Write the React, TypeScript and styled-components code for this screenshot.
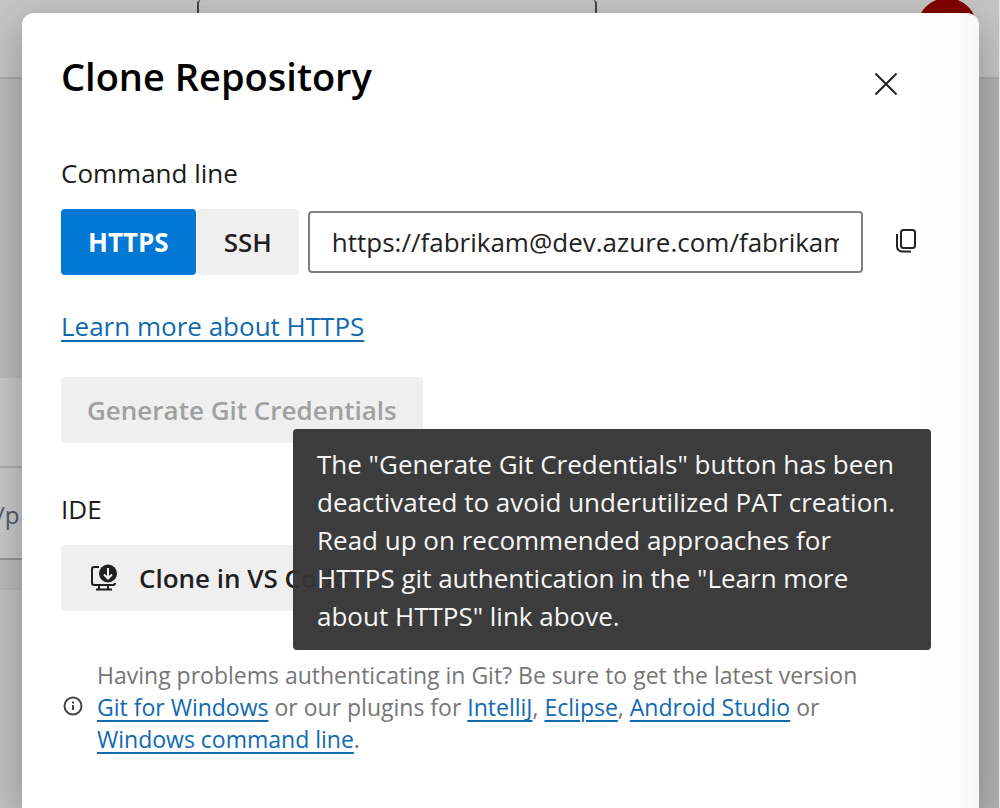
import React from "react";
import styled, { createGlobalStyle } from "styled-components";

const Global = createGlobalStyle`
  *, *::before, *::after { box-sizing: border-box; }
  body { margin: 0; background: #c4c4c4; font-family: "Open Sans", "Noto Sans", sans-serif; color: #1b1b1b; }
  button, input { font-family: inherit; }
`;

const Screen = styled.div`
  display: grid;
  min-height: 100vh;
  overflow: hidden;
  border-right: 1px solid #e6e6e6;
`;
const Backdrop = styled.div`
  grid-area: 1 / 1;
  display: flex;
  flex-direction: column;
  background: linear-gradient(to right, #c2c2c2 60%, #b2b2b2 90%);
`;
const TopBar = styled.div`
  display: flex;
  align-items: flex-start;
  justify-content: space-between;
  height: 79px;
  padding: 0 22px 0 197px;
  background: #c5c5c5;
  border-bottom: 2px solid #a9a9a9;
`;
const SearchBox = styled.div`
  width: 400px;
  height: 56px;
  border: 2px solid #444;
  border-top: 0;
  border-radius: 4px;
`;
const Avatar = styled.div`
  width: 60px;
  height: 60px;
  margin-top: -2px;
  border-radius: 50%;
  background: #820000;
`;
const SideList = styled.div`
  width: 60px;
`;
const Band = styled.div<{ $h: number; $bg: string; $line: string }>`
  display: flex;
  align-items: center;
  height: ${(p) => p.$h}px;
  padding-top: 4px;
  background: ${(p) => p.$bg};
  border-bottom: 2px solid ${(p) => p.$line};
  font-size: 24px;
  line-height: 36px;
  color: #4f5a68;
`;
const PathText = styled.span`
  width: 24px;
  margin-left: -4px;
  overflow: hidden;
`;

const Dialog = styled.section`
  grid-area: 1 / 1;
  z-index: 1;
  margin: 13px 20px 0 22px;
  padding: 39px;
  border-radius: 12px 12px 0 0;
  background: linear-gradient(to left, #f6f6f6, #fdfdfd 24px, #fff 60px);
  box-shadow: 0 12px 40px rgba(0, 0, 0, 0.28);
`;
const Header = styled.header`
  display: flex;
  align-items: flex-end;
  justify-content: space-between;
  padding-right: 38px;
`;
const Title = styled.h1`
  margin: 0;
  font-size: 38px;
  line-height: 48px;
  font-weight: 600;
  color: #000;
`;
const IconButton = styled.button`
  display: flex;
  padding: 5px;
  border: 0;
  background: none;
  color: #222;
`;
const Label = styled.h2`
  margin: 0;
  font-size: 26px;
  line-height: 36px;
  font-weight: 400;
`;
const Section = styled.div<{ $top: number }>`
  margin-top: ${(p) => p.$top}px;
`;
const CloneRow = styled.div`
  display: flex;
  align-items: center;
  margin-top: 18px;
  padding-right: 15px;
`;
const Button = styled.button<{ $primary?: boolean }>`
  display: flex;
  align-items: center;
  gap: 20px;
  height: 66px;
  padding: 0 26px;
  border: 0;
  border-radius: 4px;
  background: #efefef;
  color: #1f1f1f;
  font-size: 26px;
  line-height: 36px;
  font-weight: 600;
  white-space: nowrap;
  &:disabled { color: #a0a0a0; }
`;
const Toggle = styled(Button)`
  padding: 0 27px;
  margin-right: 1px;
  background: ${(p) => (p.$primary ? "#0078d4" : "#efefef")};
  color: ${(p) => (p.$primary ? "#fff" : "#1f1f1f")};
  font-weight: ${(p) => (p.$primary ? 700 : 600)};
`;
const UrlInput = styled.input`
  flex: 1;
  min-width: 0;
  height: 62px;
  margin: 0 28px 0 8px;
  padding: 0 22px;
  border: 2px solid #808080;
  border-radius: 4px;
  background: #fff;
  color: #222;
  font-size: 26px;
  text-overflow: clip;
`;
const Link = styled.a`
  color: #106ab0;
  text-decoration: underline;
  text-decoration-thickness: 2px;
  text-underline-offset: 4px;
`;
const LearnMore = styled.p`
  margin: 33px 0;
  font-size: 26px;
  line-height: 36px;
`;
const TipAnchor = styled.div`
  position: relative;
`;
const Tooltip = styled.div`
  position: absolute;
  z-index: 2;
  top: 52px;
  left: 232px;
  width: 638px;
  padding: 16px 24px 15px;
  border-radius: 4px;
  background: rgba(52, 52, 52, 0.96);
  color: #f6f6f6;
  font-size: 26px;
  line-height: 38px;
  font-weight: 500;
`;
const Help = styled.div`
  display: flex;
  align-items: center;
  gap: 14px;
  margin-top: 48px;
  color: #767676;
`;
const HelpText = styled.p`
  margin: 0;
  font-size: 23px;
  line-height: 32px;
`;

export default function App() {
  return (
    <Screen>
      <Global />
      <Backdrop aria-hidden="true">
        <TopBar>
          <SearchBox />
          <Avatar />
        </TopBar>
        <SideList>
          <Band $h={299} $bg="#bcbcbc" $line="#b8b8b8" />
          <Band $h={90} $bg="#c8c8c8" $line="#b0b0b0" />
          <Band $h={92} $bg="#c8c8c8" $line="#969696">
            <PathText>/pr</PathText>
          </Band>
          <Band $h={30} $bg="#bcbcbc" $line="#b6b6b6" />
        </SideList>
      </Backdrop>
      <Dialog role="dialog" aria-labelledby="clone-title">
        <Header>
          <Title id="clone-title">Clone Repository</Title>
          <IconButton aria-label="Close">
            <svg width="22" height="22" viewBox="0 0 22 22" fill="none" stroke="currentColor" strokeWidth="2">
              <path d="M.5 .5l21 21M21.500 .5l-21 21" />
            </svg>
          </IconButton>
        </Header>
        <Section $top={55}>
          <Label>Command line</Label>
          <CloneRow>
            <Toggle $primary>HTTPS</Toggle>
            <Toggle>SSH</Toggle>
            <UrlInput aria-label="Clone URL" readOnly value="https://fabrikam@dev.azure.com/fabrikam/_git/project" />
            <IconButton aria-label="Copy">
              <svg width="24" height="28" viewBox="0 0 24 28" fill="none" stroke="currentColor" strokeWidth="2">
                <rect x="5" y="2" width="14" height="18" rx="2.5" />
                <path d="M1 6v12.500a5 5 0 0 0 5 5h9" />
              </svg>
            </IconButton>
          </CloneRow>
          <LearnMore>
            <Link href="#https">Learn more about HTTPS</Link>
          </LearnMore>
          <TipAnchor>
            <Button disabled aria-describedby="credentials-tip">Generate Git Credentials</Button>
            <Tooltip role="tooltip" id="credentials-tip">
              The "Generate Git Credentials" button has been deactivated to avoid underutilized PAT creation. Read up on
              recommended approaches for HTTPS git authentication in the "Learn more about HTTPS" link above.
            </Tooltip>
          </TipAnchor>
        </Section>
        <Section $top={48}>
          <Label>IDE</Label>
          <CloneRow>
            <Button>
              <svg width="32" height="32" viewBox="0 0 32 32" fill="none" stroke="currentColor" strokeWidth="2">
                <path d="M12 5H7a2 2 0 0 0-2 2v14a2 2 0 0 0 2 2h19a2 2 0 0 0 2-2M12 23v4M21 23v4M9 27.500h16" />
                <circle cx="21" cy="11.500" r="9" fill="currentColor" stroke="none" />
                <path d="M21 6v10M17 12.500l4 4 4-4" stroke="#efefef" />
              </svg>
              Clone in VS Code
            </Button>
          </CloneRow>
        </Section>
        <Help>
          <svg width="22" height="22" viewBox="0 0 22 22" fill="none" stroke="#444" strokeWidth="2">
            <circle cx="12" cy="10" r="8.500" />
            <path d="M12 9v5M12 5.500v2" />
          </svg>
          <HelpText>
            Having problems authenticating in Git? Be sure to get the latest version
            <br />
            <Link href="#git">Git for Windows</Link> or our plugins for <Link href="#intellij">IntelliJ</Link>,{" "}
            <Link href="#eclipse">Eclipse</Link>, <Link href="#android">Android Studio</Link> or
            <br />
            <Link href="#windows">Windows command line</Link>.
          </HelpText>
        </Help>
      </Dialog>
    </Screen>
  );
}
